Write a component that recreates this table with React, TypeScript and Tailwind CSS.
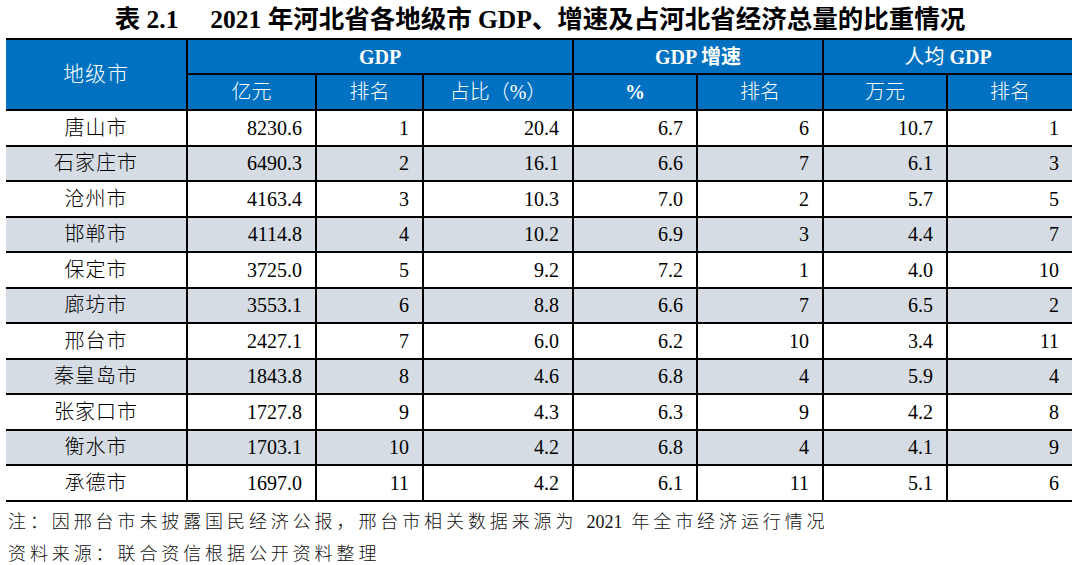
import React from "react";

const rows: string[][] = [
  ["唐山市", "8230.6", "1", "20.4", "6.7", "6", "10.7", "1"],
  ["石家庄市", "6490.3", "2", "16.1", "6.6", "7", "6.1", "3"],
  ["沧州市", "4163.4", "3", "10.3", "7.0", "2", "5.7", "5"],
  ["邯郸市", "4114.8", "4", "10.2", "6.9", "3", "4.4", "7"],
  ["保定市", "3725.0", "5", "9.2", "7.2", "1", "4.0", "10"],
  ["廊坊市", "3553.1", "6", "8.8", "6.6", "7", "6.5", "2"],
  ["邢台市", "2427.1", "7", "6.0", "6.2", "10", "3.4", "11"],
  ["秦皇岛市", "1843.8", "8", "4.6", "6.8", "4", "5.9", "4"],
  ["张家口市", "1727.8", "9", "4.3", "6.3", "9", "4.2", "8"],
  ["衡水市", "1703.1", "10", "4.2", "6.8", "4", "4.1", "9"],
  ["承德市", "1697.0", "11", "4.2", "6.1", "11", "5.1", "6"],
];

const widths = [181, 129, 107, 150, 124, 126, 124, 125];

export default function App() {
  return (
    <div className="w-[1080px] h-[565px] bg-white overflow-hidden text-black [font-family:'Liberation_Serif','Noto_Sans_CJK_SC',serif]">
      <div className="h-[38px] flex items-center justify-center text-[25.5px] font-bold leading-none pt-[2px] whitespace-pre">
        {"表 2.1     2021 年河北省各地级市 GDP、增速及占河北省经济总量的比重情况"}
      </div>
      <table className="ml-[6px] w-[1066px] table-fixed border-collapse text-[20px] leading-none">
        <colgroup>
          {widths.map((w, i) => (
            <col key={i} style={{ width: w }} />
          ))}
        </colgroup>
        <thead className="text-white bg-[#0070C0]">
          <tr className="h-[35px] border-t-2 border-black">
            <th rowSpan={2} className="font-light border-b-2 border-black text-[21px] tracking-[1px]">
              地级市
            </th>
            <th colSpan={3} className="font-bold border-l-2 border-b-2 border-black">
              GDP
            </th>
            <th colSpan={2} className="font-bold border-l-2 border-b-2 border-black">
              GDP 增速
            </th>
            <th colSpan={2} className="font-bold border-l-2 border-b-2 border-black">
              <span className="font-normal">人均</span> GDP
            </th>
          </tr>
          <tr className="h-[36px]">
            <th className="font-light border-l-2 border-b-2 border-black">亿元</th>
            <th className="font-light border-l-2 border-b-2 border-black">排名</th>
            <th className="font-light border-l-2 border-b-2 border-black">占比（%）</th>
            <th className="font-bold border-l-2 border-b-2 border-black">%</th>
            <th className="font-light border-l-2 border-b-2 border-black">排名</th>
            <th className="font-light border-l-2 border-b-2 border-black">万元</th>
            <th className="font-light border-l-2 border-b-2 border-black">排名</th>
          </tr>
        </thead>
        <tbody>
          {rows.map((r, i) => (
            <tr key={i} className={i % 2 === 1 ? "h-[35.5px] bg-[#D6DCE4]" : "h-[35.5px] bg-white"}>
              {r.map((c, j) =>
                j === 0 ? (
                  <td key={j} className="text-center font-light border-b-2 border-black tracking-[1px]">
                    {c}
                  </td>
                ) : (
                  <td key={j} className="text-right pr-[13px] border-l-2 border-b-2 border-black">
                    {c}
                  </td>
                )
              )}
            </tr>
          ))}
        </tbody>
      </table>
      <div className="pl-[8px] pt-[4px] text-[18px] font-light tracking-[3.9px] leading-[32px] text-[#111]">
        <div className="whitespace-pre">
          注：因邢台市未披露国民经济公报，邢台市相关数据来源为<span className="tracking-normal font-normal">{"  2021  "}</span>年全市经济运行情况
        </div>
        <div>资料来源：联合资信根据公开资料整理</div>
      </div>
    </div>
  );
}
